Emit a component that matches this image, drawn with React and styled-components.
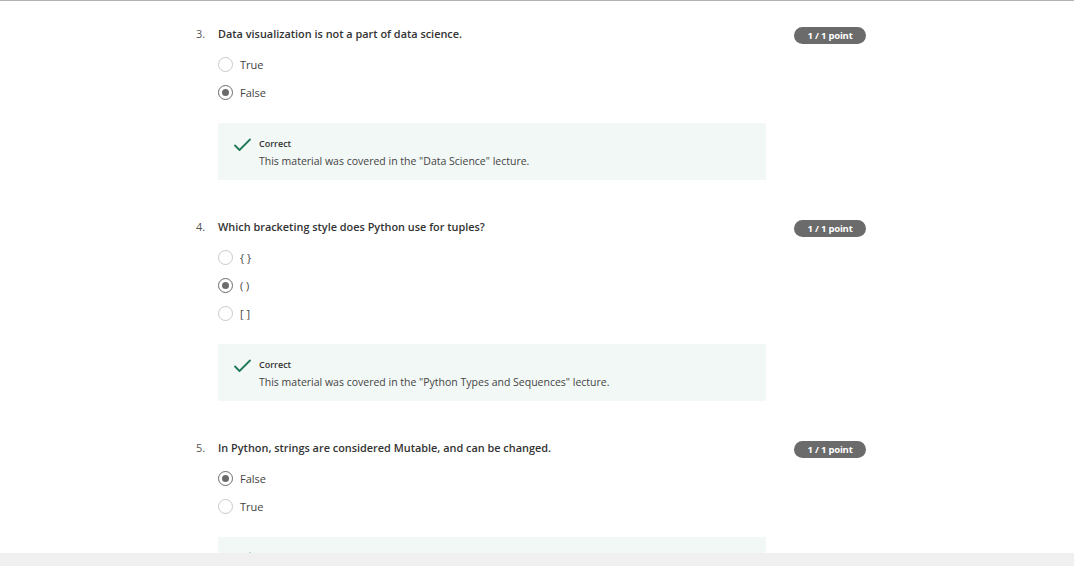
import React from "react";
import styled, { createGlobalStyle } from "styled-components";

const Global = createGlobalStyle`
  html, body { margin: 0; padding: 0; background: #fff; }
  body { font-family: "Open Sans", "Liberation Sans", sans-serif; color: #373a3c; }
  * { box-sizing: border-box; }
`;

const Frame = styled.div`
  width: 1074px;
  height: 566px;
  display: flex;
  flex-direction: column;
  overflow: hidden;
`;

const Viewport = styled.div`
  flex: 1;
  overflow: hidden;
  border-top: 1px solid #b3b3b3;
`;

const BottomBar = styled.div`
  height: 13px;
  flex: none;
  background: #f0f0f0;
`;

const Column = styled.div`
  width: 670px;
  margin-left: 196px;
  padding-top: 25px;
  display: flex;
  flex-direction: column;
  gap: 39px;
`;

const Question = styled.section`
  display: grid;
  grid-template-columns: 22px 1fr auto;
  align-items: start;
`;

const Number = styled.div`
  font-size: 11px;
  line-height: 16px;
  color: #555;
`;

const Body = styled.div`
  display: flex;
  flex-direction: column;
`;

const Title = styled.div`
  font-size: 10.9px;
  line-height: 16px;
  font-weight: 600;
  color: #333;
`;

const Options = styled.div`
  margin-top: 8px;
  display: flex;
  flex-direction: column;
`;

const Option = styled.label`
  height: 28px;
  display: flex;
  align-items: center;
  gap: 7px;
  font-size: 11px;
  color: #444;
`;

const Radio = styled.span`
  width: 15px;
  height: 15px;
  border-radius: 50%;
  border: 1.5px solid ${(p) => (p.$checked ? "#6b6b6b" : "#c9c9c9")};
  display: flex;
  align-items: center;
  justify-content: center;
  flex: none;
  &::after {
    content: "";
    width: 7px;
    height: 7px;
    border-radius: 50%;
    background: ${(p) => (p.$checked ? "#6b6b6b" : "transparent")};
  }
`;

const Feedback = styled.div`
  margin-top: 17px;
  width: 548px;
  height: 57px;
  background: #f2f8f6;
  display: flex;
  align-items: flex-start;
  padding: 14px 16px 0 16px;
  gap: 8px;
`;

const CheckIcon = styled.svg`
  width: 17px;
  height: 14px;
  margin-top: 1px;
  flex: none;
`;

const FeedText = styled.div`
  display: flex;
  flex-direction: column;
`;

const FeedTitle = styled.div`
  font-size: 9px;
  line-height: 14px;
  font-weight: 600;
  color: #333;
`;

const FeedDesc = styled.div`
  font-size: 10.5px;
  line-height: 16px;
  color: #444;
  margin-top: 2px;
`;

const Badge = styled.div`
  margin-top: 1px;
  width: 72px;
  height: 17px;
  border-radius: 9px;
  background: #6b6b6b;
  color: #fff;
  font-size: 9.5px;
  font-weight: 700;
  display: flex;
  align-items: center;
  justify-content: center;
  letter-spacing: -0.2px;
`;

const questions = [
  {
    n: "3.",
    title: "Data visualization is not a part of data science.",
    options: [
      { label: "True" },
      { label: "False", checked: true },
    ],
    feedback: 'This material was covered in the "Data Science" lecture.',
  },
  {
    n: "4.",
    title: "Which bracketing style does Python use for tuples?",
    options: [
      { label: "{ }" },
      { label: "( )", checked: true },
      { label: "[ ]" },
    ],
    feedback: 'This material was covered in the "Python Types and Sequences" lecture.',
  },
  {
    n: "5.",
    title: "In Python, strings are considered Mutable, and can be changed.",
    options: [
      { label: "False", checked: true },
      { label: "True" },
    ],
    feedback: 'This material was covered in the "Python Types and Sequences" lecture.',
  },
];

export default function App() {
  return (
    <>
      <Global />
      <Frame>
        <Viewport>
          <Column>
            {questions.map((q) => (
              <Question key={q.n}>
                <Number>{q.n}</Number>
                <Body>
                  <Title>{q.title}</Title>
                  <Options>
                    {q.options.map((o) => (
                      <Option key={o.label}>
                        <Radio $checked={o.checked} />
                        {o.label}
                      </Option>
                    ))}
                  </Options>
                  <Feedback>
                    <CheckIcon viewBox="0 0 17 14">
                      <path d="M1 7.5 L5.5 12 L16 1.5" fill="none" stroke="#1f7a55" strokeWidth="1.8" strokeLinecap="round" strokeLinejoin="round" />
                    </CheckIcon>
                    <FeedText>
                      <FeedTitle>Correct</FeedTitle>
                      <FeedDesc>{q.feedback}</FeedDesc>
                    </FeedText>
                  </Feedback>
                </Body>
                <Badge>1 / 1 point</Badge>
              </Question>
            ))}
          </Column>
        </Viewport>
        <BottomBar />
      </Frame>
    </>
  );
}
